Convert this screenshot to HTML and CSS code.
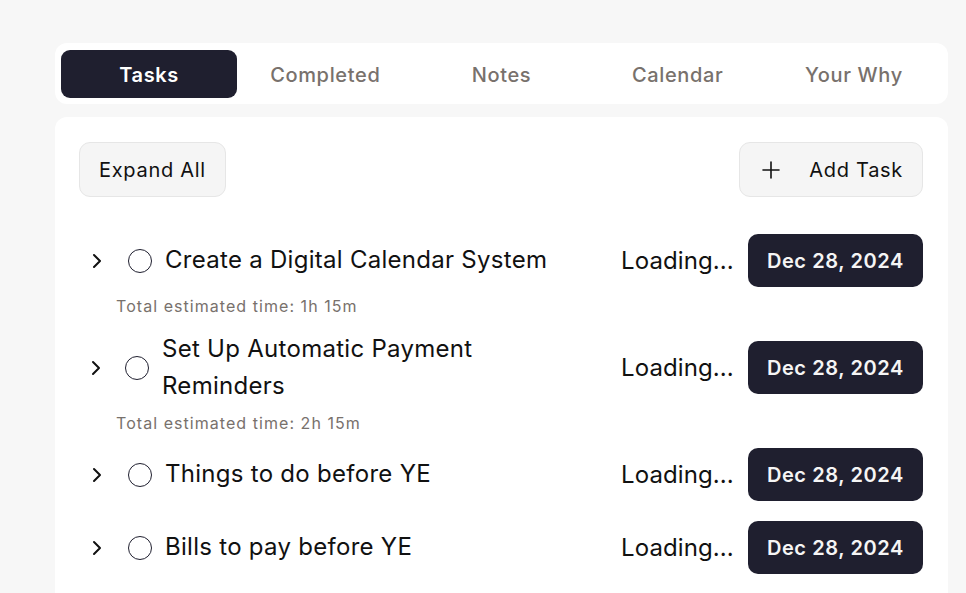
FILE: index.html
```html
<!DOCTYPE html>
<html lang="en">
<head>
<meta charset="utf-8">
<title>Tasks</title>
<link rel="stylesheet" href="styles.css">
</head>
<body>
<div class="page">
  <nav class="tabs">
    <button class="tab active">Tasks</button>
    <button class="tab">Completed</button>
    <button class="tab">Notes</button>
    <button class="tab">Calendar</button>
    <button class="tab">Your Why</button>
  </nav>
  <section class="card">
    <div class="toolbar">
      <button class="btn">Expand All</button>
      <button class="btn btn-add">
        <svg class="icon" viewBox="0 0 24 24" width="24" height="24" fill="none" stroke="currentColor" stroke-width="1.6" stroke-linecap="round"><path d="M4 12h16M12 4v16"/></svg>
        <span>Add Task</span>
      </button>
    </div>
    <ul class="tasks">
      <li class="task">
        <div class="row">
          <div class="left">
            <button class="chev"><svg viewBox="0 0 24 24" width="24" height="24" fill="none" stroke="currentColor" stroke-width="2" stroke-linecap="round" stroke-linejoin="round"><path d="m9 18 6-6-6-6"/></svg></button>
            <span class="check"></span>
            <span class="title">Create a Digital Calendar System</span>
          </div>
          <div class="meta">
            <span class="loading">Loading...</span>
            <span class="badge">Dec 28, 2024</span>
          </div>
        </div>
        <p class="est">Total estimated time: 1h 15m</p>
      </li>
      <li class="task">
        <div class="row">
          <div class="left wrapped">
            <button class="chev"><svg viewBox="0 0 24 24" width="24" height="24" fill="none" stroke="currentColor" stroke-width="2" stroke-linecap="round" stroke-linejoin="round"><path d="m9 18 6-6-6-6"/></svg></button>
            <span class="check"></span>
            <span class="title">Set Up Automatic Payment Reminders</span>
          </div>
          <div class="meta">
            <span class="loading">Loading...</span>
            <span class="badge">Dec 28, 2024</span>
          </div>
        </div>
        <p class="est">Total estimated time: 2h 15m</p>
      </li>
      <li class="task">
        <div class="row">
          <div class="left">
            <button class="chev"><svg viewBox="0 0 24 24" width="24" height="24" fill="none" stroke="currentColor" stroke-width="2" stroke-linecap="round" stroke-linejoin="round"><path d="m9 18 6-6-6-6"/></svg></button>
            <span class="check"></span>
            <span class="title">Things to do before YE</span>
          </div>
          <div class="meta">
            <span class="loading">Loading...</span>
            <span class="badge">Dec 28, 2024</span>
          </div>
        </div>
      </li>
      <li class="task">
        <div class="row">
          <div class="left">
            <button class="chev"><svg viewBox="0 0 24 24" width="24" height="24" fill="none" stroke="currentColor" stroke-width="2" stroke-linecap="round" stroke-linejoin="round"><path d="m9 18 6-6-6-6"/></svg></button>
            <span class="check"></span>
            <span class="title">Bills to pay before YE</span>
          </div>
          <div class="meta">
            <span class="loading">Loading...</span>
            <span class="badge">Dec 28, 2024</span>
          </div>
        </div>
      </li>
    </ul>
  </section>
</div>
</body>
</html>
```
FILE: styles.css
```css
* { box-sizing: border-box; }
html, body { margin: 0; padding: 0; }
body {
  background: #f7f7f7;
  font-family: Inter, "Noto Sans", sans-serif;
  color: #111111;
  height: 593px;
  overflow: hidden;
}
.page {
  margin-left: 55px;
  width: 893px;
  padding-top: 43px;
}
.tabs {
  display: grid;
  grid-template-columns: repeat(5, 1fr);
  background: #ffffff;
  border-radius: 12px;
  padding: 7px 6px 6px;
}
.tab {
  height: 48px;
  border: 0;
  background: transparent;
  font-family: inherit;
  font-size: 20px;
  letter-spacing: 0.65px;
  font-weight: 500;
  color: #78716c;
  border-radius: 9px;
  padding: 2px 0 0;
}
.tab.active {
  background: #1f1f2f;
  color: #ffffff;
  font-weight: 600;
}
.card {
  margin-top: 13px;
  background: #ffffff;
  border-radius: 12px 12px 0 0;
  padding: 25px 25px 24px 24px;
  min-height: 480px;
}
.toolbar {
  display: flex;
  justify-content: space-between;
  align-items: center;
}
.btn {
  height: 55px;
  display: inline-flex;
  align-items: center;
  background: #f5f5f5;
  border: 1px solid #e6e6e6;
  border-radius: 11px;
  padding: 0 19px;
  font-family: inherit;
  font-size: 20px;
  letter-spacing: 0.7px;
  font-weight: 400;
  color: #111111;
}
.btn-add { gap: 26px; }
.icon { display: block; }
.tasks {
  list-style: none;
  margin: 37px 0 0;
  padding: 0;
  display: flex;
  flex-direction: column;
  gap: 20px;
}
.row {
  display: flex;
  align-items: center;
  justify-content: space-between;
  gap: 28px;
  min-height: 53px;
}
.left {
  display: flex;
  align-items: center;
  gap: 13px;
  flex: 1;
  min-width: 0;
}
.left.wrapped .chev { width: 33px; }
.chev {
  width: 36px;
  height: 36px;
  border: 0;
  background: transparent;
  padding: 0;
  display: flex;
  align-items: center;
  justify-content: center;
  color: #111111;
  flex-shrink: 0;
}
.check {
  width: 24px;
  height: 24px;
  border: 1.2px solid #1f1f2f;
  border-radius: 50%;
  flex-shrink: 0;
}
.title {
  font-size: 24px;
  letter-spacing: 0.28px;
  line-height: 36.5px;
}
.meta {
  display: flex;
  align-items: center;
  gap: 14px;
  flex-shrink: 0;
}
.loading {
  font-size: 24px;
  letter-spacing: 0.1px;
  color: #111111;
}
.badge {
  height: 53px;
  display: inline-flex;
  align-items: center;
  padding: 0 19px;
  background: #1f1f2f;
  color: #f5f5f5;
  border-radius: 10px;
  font-size: 20px;
  letter-spacing: 0.6px;
  font-weight: 600;
}
.est {
  margin: 7px 0 -7px 37px;
  font-size: 16px;
  letter-spacing: 1.05px;
  line-height: 24px;
  color: #78716c;
}
```
